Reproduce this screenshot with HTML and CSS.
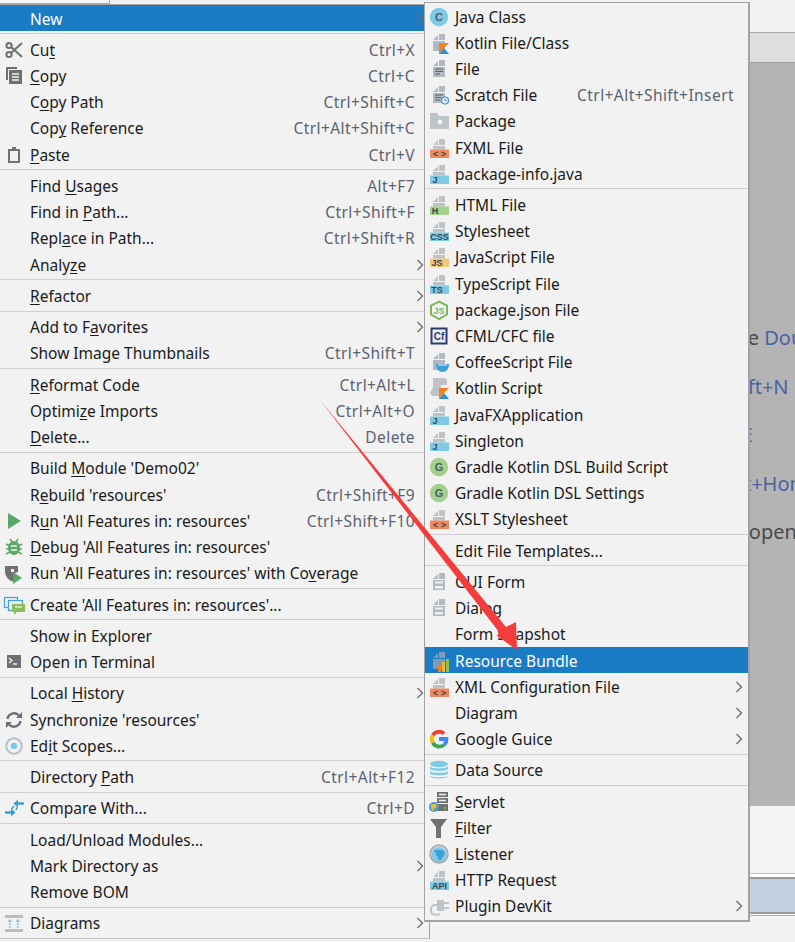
FILE: index.html
```html
<!DOCTYPE html>
<html lang="en">
<head>
<meta charset="utf-8">
<title>New menu</title>
<link rel="stylesheet" href="styles.css">
</head>
<body>
<svg class="sprite" aria-hidden="true">
  <defs>
    <g id="top"><path class="f1" d="M5 8 10 3v5zM11 2h6v6h-6z"/><path class="f1" d="M5 9h12v3.500H5z"/></g>
    <g id="file"><path class="f2" d="M5 8 10 3v5zM11 2h6v6h-6z"/><path class="f2" d="M5 9h12v10H5z"/></g>
    <symbol id="i-cut" viewBox="0 0 22 22"><g class="s-g"><circle cx="6" cy="6.500" r="2.600"/><circle cx="6" cy="15.500" r="2.600"/><path d="M8 8 19 18M8 14 19 4"/></g></symbol>
    <symbol id="i-copy" viewBox="0 0 22 22"><path class="f-g" d="M3 2h11v2H5v11H3z"/><path class="f-g" d="M6 5h13v14H6z"/><path class="l-w" d="M9 9h7M9 12h7M9 15h7"/></symbol>
    <symbol id="i-paste" viewBox="0 0 22 22"><path class="f-g" d="M5 5h4V3h4v2h4v14H5zM7 7v10h8V7z"/></symbol>
    <symbol id="i-run" viewBox="0 0 22 22"><path class="f-run" d="M5 3 18 11 5 19z"/></symbol>
    <symbol id="i-debug" viewBox="0 0 22 22"><ellipse class="f-run" cx="11" cy="12" rx="6" ry="7"/><path class="s-run" d="M3 8l4 2M19 8l-4 2M3 13h4M19 13h-4M3 18l4-2M19 18l-4-2M7 3l2 3M15 3l-2 3"/><path class="l-w2" d="M8 10h6M8 14h6"/></symbol>
    <symbol id="i-cov" viewBox="0 0 22 22"><path class="f-g" d="M2 4h13v6l-3 1v9C6 19 2 15 2 9z"/><path class="f-w" d="M8 7h3v3H8z"/><path class="f-run" d="M10 10l9 6-9 6z"/></symbol>
    <symbol id="i-create" viewBox="0 0 22 22"><rect class="w-b" x="1.500" y="3.500" width="13" height="10"/><rect class="w-b" x="5.500" y="6.500" width="14" height="10"/><path class="f-gr" d="M9 10h13v8h-8l-3 3v-3H9z"/><path class="l-w" d="M12 13h7"/></symbol>
    <symbol id="i-term" viewBox="0 0 22 22"><rect class="f-g" x="4" y="4" width="14" height="13"/><path class="l-w" d="M6 7l3 2.500L6 12M10 13h4"/></symbol>
    <symbol id="i-sync" viewBox="0 0 22 22"><g class="s-g2"><path d="M4.500 10A6.700 6.700 0 0 1 16 6.500"/><path d="M17.500 12A6.700 6.700 0 0 1 6 15.500"/></g><path class="f-g" d="M13 9h6V3zM9 13H3v6z"/></symbol>
    <symbol id="i-scope" viewBox="0 0 22 22"><circle class="ring" cx="11" cy="11" r="7.700"/><circle class="f-b" cx="11" cy="11" r="3.300"/></symbol>
    <symbol id="i-cmp" viewBox="0 0 22 22"><path class="f-b2" d="M21 5.200h-6V2.500L10.500 6.500 15 10.500V7.800h6zM2 14.200h6v-2.700l4.500 4-4.500 4v-2.700H2z"/><path class="l-b2" d="M11 9 8.500 12M13 13l1.500-3"/></symbol>
    <symbol id="i-diag" viewBox="0 0 22 22"><path class="f1b" d="M2 3h18v3H2zM2 17h18v3H2z"/><path class="l-b" d="M7 16V9M15 16V9"/><path class="f-b" d="M7 7l2.500 3h-5zM15 7l2.500 3h-5z"/></symbol>
    <symbol id="i-java" viewBox="0 0 22 22"><circle class="f-b" cx="11" cy="11" r="9.200"/><text class="t-c" x="11" y="15">C</text></symbol>
    <symbol id="i-kot" viewBox="0 0 22 22"><use href="#file"/><path class="f-or" d="M11 22V11h10l-5 5z" /><path class="f-bl" d="M11 22l5-6 5 6z"/></symbol>
    <symbol id="i-file" viewBox="0 0 22 22"><use href="#file"/><path class="l-d" d="M7 11h8M7 13.500h8M7 16h5"/></symbol>
    <symbol id="i-scr" viewBox="0 0 22 22"><use href="#file"/><path class="l-d" d="M7 11h8M7 13.500h6M7 16h5"/><circle class="clock" cx="17" cy="16.500" r="3.500"/><path class="l-cl" d="M17 14.500v2.200h2"/></symbol>
    <symbol id="i-pkg" viewBox="0 0 22 22"><path class="f1" d="M2 3h7l2 3h10v13H2z"/><circle class="f-m" cx="12" cy="12" r="2.500"/></symbol>
    <symbol id="i-fxml" viewBox="0 0 22 22"><use href="#top"/><rect class="f-or2" x="2" y="12.500" width="19" height="8.500"/><text class="t-b" x="11.500" y="20">&lt; &gt;</text></symbol>
    <symbol id="i-j" viewBox="0 0 22 22"><use href="#top"/><rect class="f-b" x="2" y="12.500" width="19" height="8.500"/><text class="t-b" x="7" y="20">J</text></symbol>
    <symbol id="i-html" viewBox="0 0 22 22"><use href="#top"/><rect class="f-gn" x="2" y="12.500" width="19" height="8.500"/><text class="t-b" x="7" y="20">H</text></symbol>
    <symbol id="i-css" viewBox="0 0 22 22"><use href="#top"/><rect class="f-b" x="2" y="12.500" width="19" height="8.500"/><text class="t-b" x="11.500" y="20">CSS</text></symbol>
    <symbol id="i-js" viewBox="0 0 22 22"><use href="#top"/><rect class="f-y" x="2" y="12.500" width="19" height="8.500"/><text class="t-b" x="9" y="20">JS</text></symbol>
    <symbol id="i-ts" viewBox="0 0 22 22"><use href="#top"/><rect class="f-b" x="2" y="12.500" width="19" height="8.500"/><text class="t-b" x="9" y="20">TS</text></symbol>
    <symbol id="i-node" viewBox="0 0 22 22"><path class="hex" d="M11 2.500 19 6.500v9L11 20 3 15.500v-9z"/><text class="t-n" x="11" y="15">JS</text></symbol>
    <symbol id="i-cf" viewBox="0 0 22 22"><rect class="cf" x="3.500" y="3.500" width="15" height="15"/><text class="t-cf" x="11" y="15">Cf</text></symbol>
    <symbol id="i-cof" viewBox="0 0 22 22"><use href="#file"/><path class="f-b2" d="M8 13h13c0 5-3 8-6.500 8S8 18 8 13z"/><path class="f-w" d="M10 13.500h9v1h-9z"/></symbol>
    <symbol id="i-ks" viewBox="0 0 22 22"><path class="f1" d="M5 1h11a3 3 0 0 1 3 3v4h-6v11H5a3 3 0 0 1-2-5c2-2 2-4 2-6z"/><path class="f-or" d="M11 22V11h10l-5 5z"/><path class="f-bl" d="M11 22l5-6 5 6z"/></symbol>
    <symbol id="i-grad" viewBox="0 0 22 22"><circle class="f-gn" cx="11" cy="11" r="9.200"/><text class="t-c" x="11" y="15">G</text></symbol>
    <symbol id="i-form" viewBox="0 0 22 22"><path class="f2" d="M5 8 10 3v5zM11 2h6v6h-6z"/><path class="f2" d="M5 9h12v10H5z"/><path class="f-w" d="M7 10.500h8v2H7zM7 15h8v2.500H7z"/></symbol>
    <symbol id="i-res" viewBox="0 0 22 22"><path class="f-res" d="M5 8 10 3v5zM11 2h6v6h-6z"/><path class="f-res" d="M5 9h12v10H5z"/><path class="f-or" d="M10 15h3v7h-3z"/><path class="f-y2" d="M14 12h3v10h-3z"/><path class="f-gr" d="M18 9h3v13h-3z"/></symbol>
    <symbol id="i-goog" viewBox="0 0 22 22"><g class="gg"><path class="g-r" d="M4.800 7.200A7.500 7.500 0 0 1 16 5.600"/><path class="g-y" d="M4.800 7.200a7.500 7.500 0 0 0 0 7.600"/><path class="g-g" d="M4.800 14.800A7.500 7.500 0 0 0 16.500 16.500"/><path class="g-b" d="M16.500 16.500A7.500 7.500 0 0 0 18.500 11H11"/></g></symbol>
    <symbol id="i-ds" viewBox="0 0 22 22"><ellipse class="f-b" cx="11" cy="5" rx="9" ry="3.200"/><path class="f-b" d="M2 7.500c2 2.500 16 2.500 18 0V10c-2 2.500-16 2.500-18 0zM2 12c2 2.500 16 2.500 18 0v2.500c-2 2.500-16 2.500-18 0zM2 16.500c2 2.500 16 2.500 18 0c0 4-18 4-18 0z"/></symbol>
    <symbol id="i-srv" viewBox="0 0 22 22"><path class="f-g" d="M9 1h11v5H9zM9 7h11v5H9zM9 13h11v7H9z"/><path class="l-w" d="M11 3.500h7M11 9.500h7"/><circle class="f-gr" cx="17" cy="17" r="1"/><circle class="f-b2" cx="6" cy="16" r="5"/><path class="f-y2" d="M3 13h5l1 3-3 2-1 3-2-4z"/></symbol>
    <symbol id="i-flt" viewBox="0 0 22 22"><path class="f-g" d="M2 2h17l-6 8v11h-5V10z"/></symbol>
    <symbol id="i-lis" viewBox="0 0 22 22"><circle class="hp" cx="11" cy="11" r="8.800"/><circle class="f-b" cx="11" cy="11.500" r="7.500"/><path class="f-b2" d="M6 7h9l2 3-5 8-3-5z"/></symbol>
    <symbol id="i-api" viewBox="0 0 22 22"><use href="#top"/><rect class="f-b" x="2" y="12.500" width="19" height="8.500"/><text class="t-b" x="11.500" y="20">API</text></symbol>
    <symbol id="i-plug" viewBox="0 0 22 22"><path class="f1" d="M9 5h7v2h5v2h-5v3h5v2h-5v2H9z"/><path class="plug" d="M9 10H7a4 4 0 0 0-4 4v2a3.500 3.500 0 0 0 3.500 3.500H12"/></symbol>
    <symbol id="i-chev" viewBox="0 0 8 12"><path class="chev" d="M1.500 1 6.500 6 1.500 11"/></symbol>
  </defs>
</svg>

<main class="ide">
  <div class="strip"><div class="strip-tab"></div></div>
  <div class="tabs"></div>
  <section class="welcome">
    <p class="hint">Search Everywhere <span class="key">Double Shift</span></p>
    <p class="hint">Go to File <span class="key">Ctrl+Shift+N</span></p>
    <p class="hint">Recent Files <span class="key">Ctrl+E</span></p>
    <p class="hint">Navigation Bar <span class="key">Alt+Home</span></p>
    <p class="hint">Drop files here to open</p>
  </section>
  <div class="lower"></div>
  <div class="rule-a"></div>
  <div class="sel"></div>
  <div class="rule-b"></div>
</main>

<nav class="menu menu-main">
  <div class="item on"><span class="ico"></span><span class="lb">New</span><span class="arr"><svg class="chv"><use href="#i-chev"/></svg></span></div>
  <hr class="sep">
  <div class="item"><span class="ico"><svg class="ic"><use href="#i-cut"/></svg></span><span class="lb">Cu<u>t</u></span><span class="sc">Ctrl+X</span><span class="arr"></span></div>
  <div class="item"><span class="ico"><svg class="ic"><use href="#i-copy"/></svg></span><span class="lb"><u>C</u>opy</span><span class="sc">Ctrl+C</span><span class="arr"></span></div>
  <div class="item"><span class="ico"></span><span class="lb">C<u>o</u>py Path</span><span class="sc">Ctrl+Shift+C</span><span class="arr"></span></div>
  <div class="item"><span class="ico"></span><span class="lb">Cop<u>y</u> Reference</span><span class="sc">Ctrl+Alt+Shift+C</span><span class="arr"></span></div>
  <div class="item"><span class="ico"><svg class="ic"><use href="#i-paste"/></svg></span><span class="lb"><u>P</u>aste</span><span class="sc">Ctrl+V</span><span class="arr"></span></div>
  <hr class="sep">
  <div class="item"><span class="ico"></span><span class="lb">Find <u>U</u>sages</span><span class="sc">Alt+F7</span><span class="arr"></span></div>
  <div class="item"><span class="ico"></span><span class="lb">Find in <u>P</u>ath...</span><span class="sc">Ctrl+Shift+F</span><span class="arr"></span></div>
  <div class="item"><span class="ico"></span><span class="lb">Repl<u>a</u>ce in Path...</span><span class="sc">Ctrl+Shift+R</span><span class="arr"></span></div>
  <div class="item"><span class="ico"></span><span class="lb">Analy<u>z</u>e</span><span class="arr"><svg class="chv"><use href="#i-chev"/></svg></span></div>
  <hr class="sep">
  <div class="item"><span class="ico"></span><span class="lb"><u>R</u>efactor</span><span class="arr"><svg class="chv"><use href="#i-chev"/></svg></span></div>
  <hr class="sep">
  <div class="item"><span class="ico"></span><span class="lb">Add to F<u>a</u>vorites</span><span class="arr"><svg class="chv"><use href="#i-chev"/></svg></span></div>
  <div class="item"><span class="ico"></span><span class="lb">Show Image Thumbnails</span><span class="sc">Ctrl+Shift+T</span><span class="arr"></span></div>
  <hr class="sep">
  <div class="item"><span class="ico"></span><span class="lb"><u>R</u>eformat Code</span><span class="sc">Ctrl+Alt+L</span><span class="arr"></span></div>
  <div class="item"><span class="ico"></span><span class="lb">Optimi<u>z</u>e Imports</span><span class="sc">Ctrl+Alt+O</span><span class="arr"></span></div>
  <div class="item"><span class="ico"></span><span class="lb"><u>D</u>elete...</span><span class="sc">Delete</span><span class="arr"></span></div>
  <hr class="sep">
  <div class="item"><span class="ico"></span><span class="lb">Build <u>M</u>odule 'Demo02'</span><span class="arr"></span></div>
  <div class="item"><span class="ico"></span><span class="lb">R<u>e</u>build 'resources'</span><span class="sc">Ctrl+Shift+F9</span><span class="arr"></span></div>
  <div class="item"><span class="ico"><svg class="ic"><use href="#i-run"/></svg></span><span class="lb">R<u>u</u>n 'All Features in: resources'</span><span class="sc">Ctrl+Shift+F10</span><span class="arr"></span></div>
  <div class="item"><span class="ico"><svg class="ic"><use href="#i-debug"/></svg></span><span class="lb"><u>D</u>ebug 'All Features in: resources'</span><span class="arr"></span></div>
  <div class="item"><span class="ico"><svg class="ic"><use href="#i-cov"/></svg></span><span class="lb">Run 'All Features in: resources' with Co<u>v</u>erage</span><span class="arr"></span></div>
  <hr class="sep">
  <div class="item"><span class="ico"><svg class="ic"><use href="#i-create"/></svg></span><span class="lb">Create 'All Features in: resources'...</span><span class="arr"></span></div>
  <hr class="sep">
  <div class="item"><span class="ico"></span><span class="lb">Show in Explorer</span><span class="arr"></span></div>
  <div class="item"><span class="ico"><svg class="ic"><use href="#i-term"/></svg></span><span class="lb">Open in Terminal</span><span class="arr"></span></div>
  <hr class="sep">
  <div class="item"><span class="ico"></span><span class="lb">Local <u>H</u>istory</span><span class="arr"><svg class="chv"><use href="#i-chev"/></svg></span></div>
  <div class="item"><span class="ico"><svg class="ic"><use href="#i-sync"/></svg></span><span class="lb">Synchronize 'resources'</span><span class="arr"></span></div>
  <div class="item"><span class="ico"><svg class="ic"><use href="#i-scope"/></svg></span><span class="lb">Ed<u>i</u>t Scopes...</span><span class="arr"></span></div>
  <hr class="sep">
  <div class="item"><span class="ico"></span><span class="lb">Directory <u>P</u>ath</span><span class="sc">Ctrl+Alt+F12</span><span class="arr"></span></div>
  <hr class="sep">
  <div class="item"><span class="ico"><svg class="ic"><use href="#i-cmp"/></svg></span><span class="lb">Compare With...</span><span class="sc">Ctrl+D</span><span class="arr"></span></div>
  <hr class="sep">
  <div class="item"><span class="ico"></span><span class="lb">Load/Unload Modules...</span><span class="arr"></span></div>
  <div class="item"><span class="ico"></span><span class="lb">Mark Directory as</span><span class="arr"><svg class="chv"><use href="#i-chev"/></svg></span></div>
  <div class="item"><span class="ico"></span><span class="lb">Remove BOM</span><span class="arr"></span></div>
  <hr class="sep">
  <div class="item"><span class="ico"><svg class="ic"><use href="#i-diag"/></svg></span><span class="lb">Diagrams</span><span class="arr"><svg class="chv"><use href="#i-chev"/></svg></span></div>
</nav>

<nav class="menu menu-new">
  <div class="item"><span class="ico"><svg class="ic"><use href="#i-java"/></svg></span><span class="lb">Java Class</span><span class="arr"></span></div>
  <div class="item"><span class="ico"><svg class="ic"><use href="#i-kot"/></svg></span><span class="lb">Kotlin File/Class</span><span class="arr"></span></div>
  <div class="item"><span class="ico"><svg class="ic"><use href="#i-file"/></svg></span><span class="lb">File</span><span class="arr"></span></div>
  <div class="item"><span class="ico"><svg class="ic"><use href="#i-scr"/></svg></span><span class="lb">Scratch File</span><span class="sc">Ctrl+Alt+Shift+Insert</span><span class="arr"></span></div>
  <div class="item"><span class="ico"><svg class="ic"><use href="#i-pkg"/></svg></span><span class="lb">Package</span><span class="arr"></span></div>
  <div class="item"><span class="ico"><svg class="ic"><use href="#i-fxml"/></svg></span><span class="lb">FXML File</span><span class="arr"></span></div>
  <div class="item"><span class="ico"><svg class="ic"><use href="#i-j"/></svg></span><span class="lb">package-info.java</span><span class="arr"></span></div>
  <hr class="sep">
  <div class="item"><span class="ico"><svg class="ic"><use href="#i-html"/></svg></span><span class="lb">HTML File</span><span class="arr"></span></div>
  <div class="item"><span class="ico"><svg class="ic"><use href="#i-css"/></svg></span><span class="lb">Stylesheet</span><span class="arr"></span></div>
  <div class="item"><span class="ico"><svg class="ic"><use href="#i-js"/></svg></span><span class="lb">JavaScript File</span><span class="arr"></span></div>
  <div class="item"><span class="ico"><svg class="ic"><use href="#i-ts"/></svg></span><span class="lb">TypeScript File</span><span class="arr"></span></div>
  <div class="item"><span class="ico"><svg class="ic"><use href="#i-node"/></svg></span><span class="lb">package.json File</span><span class="arr"></span></div>
  <div class="item"><span class="ico"><svg class="ic"><use href="#i-cf"/></svg></span><span class="lb">CFML/CFC file</span><span class="arr"></span></div>
  <div class="item"><span class="ico"><svg class="ic"><use href="#i-cof"/></svg></span><span class="lb">CoffeeScript File</span><span class="arr"></span></div>
  <div class="item"><span class="ico"><svg class="ic"><use href="#i-ks"/></svg></span><span class="lb">Kotlin Script</span><span class="arr"></span></div>
  <div class="item"><span class="ico"><svg class="ic"><use href="#i-j"/></svg></span><span class="lb">JavaFXApplication</span><span class="arr"></span></div>
  <div class="item"><span class="ico"><svg class="ic"><use href="#i-j"/></svg></span><span class="lb">Singleton</span><span class="arr"></span></div>
  <div class="item"><span class="ico"><svg class="ic"><use href="#i-grad"/></svg></span><span class="lb">Gradle Kotlin DSL Build Script</span><span class="arr"></span></div>
  <div class="item"><span class="ico"><svg class="ic"><use href="#i-grad"/></svg></span><span class="lb">Gradle Kotlin DSL Settings</span><span class="arr"></span></div>
  <div class="item"><span class="ico"><svg class="ic"><use href="#i-fxml"/></svg></span><span class="lb">XSLT Stylesheet</span><span class="arr"></span></div>
  <hr class="sep">
  <div class="item"><span class="ico"></span><span class="lb">Edit File Templates...</span><span class="arr"></span></div>
  <hr class="sep">
  <div class="item"><span class="ico"><svg class="ic"><use href="#i-form"/></svg></span><span class="lb">GUI Form</span><span class="arr"></span></div>
  <div class="item"><span class="ico"><svg class="ic"><use href="#i-form"/></svg></span><span class="lb">Dialog</span><span class="arr"></span></div>
  <div class="item"><span class="ico"></span><span class="lb">Form Snapshot</span><span class="arr"></span></div>
  <div class="item on"><span class="ico"><svg class="ic"><use href="#i-res"/></svg></span><span class="lb">Resource Bundle</span><span class="arr"></span></div>
  <div class="item"><span class="ico"><svg class="ic"><use href="#i-fxml"/></svg></span><span class="lb">XML Configuration File</span><span class="arr"><svg class="chv"><use href="#i-chev"/></svg></span></div>
  <div class="item"><span class="ico"></span><span class="lb">Diagram</span><span class="arr"><svg class="chv"><use href="#i-chev"/></svg></span></div>
  <div class="item"><span class="ico"><svg class="ic"><use href="#i-goog"/></svg></span><span class="lb">Google Guice</span><span class="arr"><svg class="chv"><use href="#i-chev"/></svg></span></div>
  <hr class="sep">
  <div class="item"><span class="ico"><svg class="ic"><use href="#i-ds"/></svg></span><span class="lb">Data Source</span><span class="arr"></span></div>
  <hr class="sep">
  <div class="item"><span class="ico"><svg class="ic"><use href="#i-srv"/></svg></span><span class="lb"><u>S</u>ervlet</span><span class="arr"></span></div>
  <div class="item"><span class="ico"><svg class="ic"><use href="#i-flt"/></svg></span><span class="lb"><u>F</u>ilter</span><span class="arr"></span></div>
  <div class="item"><span class="ico"><svg class="ic"><use href="#i-lis"/></svg></span><span class="lb"><u>L</u>istener</span><span class="arr"></span></div>
  <div class="item"><span class="ico"><svg class="ic"><use href="#i-api"/></svg></span><span class="lb">HTTP Request</span><span class="arr"></span></div>
  <div class="item"><span class="ico"><svg class="ic"><use href="#i-plug"/></svg></span><span class="lb">Plugin DevKit</span><span class="arr"><svg class="chv"><use href="#i-chev"/></svg></span></div>
</nav>

<svg class="annot" viewBox="0 0 795 942" aria-hidden="true">
  <path class="annot-arrow" d="M320 400 506 627 516 622 517 650 497 636 499 632Z"/>
</svg>
</body>
</html>
```

FILE: styles.css
```css
* { box-sizing: border-box; }
html, body { height: 100%; }
body {
  margin: 0;
  overflow: hidden;
  background: #f2f2f2;
  font-family: "Noto Sans", "Liberation Sans", sans-serif;
  font-size: 15.500px;
  color: #1a1a1a;
}
.sprite { position: absolute; width: 0; height: 0; }

/* Window behind the menus */
.ide { display: flex; flex-direction: column; height: 942px; }
.strip { height: 32px; flex: none; }
.strip-tab { width: 110px; height: 4px; background: #f4f4f4; border-right: 1px solid #aaa; border-bottom: 1px solid #aaa; }
.tabs { height: 31px; flex: none; background: #dedede; border-top: 1px solid #aaa; border-bottom: 1px solid #999; }
.welcome {
  height: 743px;
  flex: none;
  overflow: hidden;
  background: #b4b4b4;
  padding: 265px 0 0 581px;
  display: flex;
  flex-direction: column;
  gap: 28.500px;
  font-size: 20px;
  color: #4a4a4a;
}
.hint { margin: 0; line-height: 20px; white-space: nowrap; }
.key { color: #4a62a4; }
.lower { height: 67px; flex: none; background: #f3f3f3; }
.rule-a { height: 6px; flex: none; background: #fff; border-top: 1px solid #c0c0c0; border-bottom: 2px solid #999; }
.sel { height: 33px; flex: none; background: #c4cfe0; }
.rule-b { height: 4px; flex: none; background: #fff; border-top: 2px solid #999; border-bottom: 1px solid #aaa; }

/* Menus */
.menu { position: absolute; background: #f2f2f2; }
.menu-main { left: 0; top: 4px; width: 430px; height: 935px; border-top: 1px solid #a3a3a3; border-right: 1px solid #a3a3a3; border-bottom: 1px solid #c0c0c0; }
.menu-new { left: 424px; top: 2px; width: 326px; height: 920px; border: 1px solid #a3a3a3; border-width: 1px 2px 2px 1px; }
.item { display: flex; align-items: center; height: 26.200px; padding: 1px 5px 0 3px; white-space: nowrap; }
.item.on { background: #1a7cc4; color: #fff; }
.ico { flex: none; width: 22px; height: 22px; margin-right: 5px; }
.ic { display: block; width: 22px; height: 22px; }
.lb { flex: 1; }
u { text-decoration-thickness: 1px; text-underline-offset: 2px; }
.sc { color: #5c6270; margin: 0 -1px 0 12px; letter-spacing: 0.430px; }
.arr { flex: none; width: 10px; display: flex; justify-content: flex-end; }
.chv { display: block; width: 8px; height: 12px; }
.chev { fill: none; stroke: #6b6b6b; stroke-width: 1.300; }
.on .chev { stroke: #cfe6f7; }
.sep { height: 5.150px; margin: 0; border: 0; background: linear-gradient(#d0d0d0, #d0d0d0) center / 100% 1px no-repeat; }

/* Annotation arrow */
.annot { position: absolute; left: 0; top: 0; width: 795px; height: 942px; pointer-events: none; }
.annot-arrow { fill: #f43c3c; }

/* Icon paints */
.f1 { fill: #bec3c8; }
.f2 { fill: #b2b9c0; }
.f1b { fill: #b4bec6; }
.f-g { fill: #707070; }
.f-w { fill: #f2f2f2; }
.f-m { fill: #f2f2f2; }
.f-b { fill: #7ec9e6; }
.f-b2 { fill: #3d9fd8; }
.f-run { fill: #59a869; }
.f-gr { fill: #8cbf5c; }
.f-gn { fill: #a4d08e; }
.f-y { fill: #f4c67c; }
.f-y2 { fill: #e8b93f; }
.f-or { fill: #f58220; }
.f-or2 { fill: #f0895f; }
.f-bl { fill: #2a8fd6; }
.f-res { fill: #7f9cb3; }
.s-g { fill: none; stroke: #707070; stroke-width: 2; }
.s-g2 { fill: none; stroke: #707070; stroke-width: 2.400; }
.s-run { fill: none; stroke: #59a869; stroke-width: 1.500; }
.l-w { fill: none; stroke: #f2f2f2; stroke-width: 1.300; }
.l-w2 { fill: none; stroke: #f2f2f2; stroke-width: 1.500; }
.l-d { fill: none; stroke: #5f6368; stroke-width: 1.200; }
.l-b { fill: none; stroke: #7ec9e6; stroke-width: 1.500; stroke-dasharray: 2 1; }
.l-b2 { fill: none; stroke: #3d9fd8; stroke-width: 1.500; }
.l-cl { fill: none; stroke: #3d8fd0; stroke-width: 1; }
.clock { fill: #f2f2f2; stroke: #3d8fd0; stroke-width: 1.200; }
.w-b { fill: #e6f1f8; stroke: #4a9fd4; stroke-width: 1.200; }
.ring { fill: none; stroke: #b6c0c8; stroke-width: 2; }
.hex { fill: none; stroke: #7fb65a; stroke-width: 2; }
.cf { fill: #e8edf6; stroke: #2c3a6e; stroke-width: 2; }
.hp { fill: none; stroke: #a8acb0; stroke-width: 2; }
.plug { fill: none; stroke: #bec3c8; stroke-width: 2; }
.gg path { fill: none; stroke-width: 3.800; }
.g-r { stroke: #ea4335; }
.g-y { stroke: #fbbc05; }
.g-g { stroke: #34a853; }
.g-b { stroke: #4285f4; }
.t-c, .t-b, .t-n, .t-cf { font-family: "Liberation Sans", sans-serif; font-weight: 700; text-anchor: middle; }
.t-c { font-size: 11px; fill: #4e5c66; }
.t-b { font-size: 9px; fill: #38474f; }
.t-n { font-size: 9px; fill: #7fb65a; }
.t-cf { font-size: 10px; fill: #2c3a6e; }
```
